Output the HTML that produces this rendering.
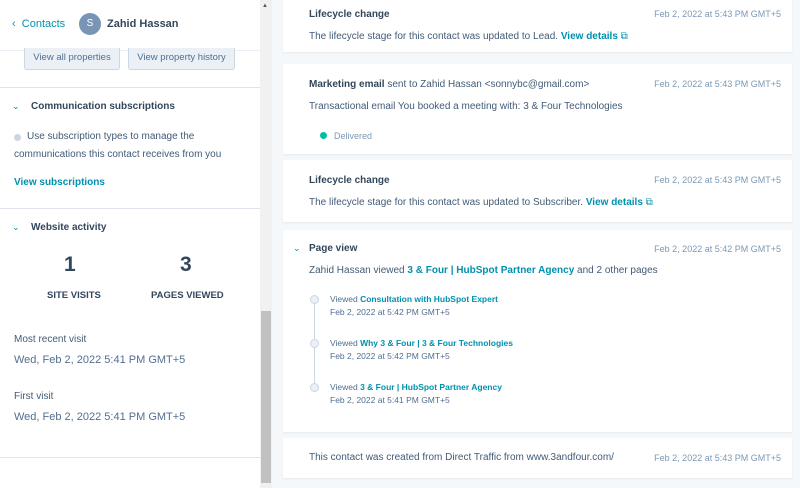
<!DOCTYPE html>
<html><head><style>
*{box-sizing:border-box;margin:0;padding:0}
body{width:800px;height:488px;overflow:hidden;font-family:"Liberation Sans",sans-serif;background:#f5f8fa;position:relative;color:#33475b}
.abs{position:absolute;white-space:nowrap}
#left{position:absolute;left:0;top:0;width:260px;height:488px;background:#fff}
.sb{position:absolute;left:260px;top:0;width:12px;height:488px;background:#f1f1f1}
.thumb{position:absolute;left:261px;top:311px;width:10px;height:172px;background:#c1c1c1}
.hr{position:absolute;left:0;width:260px;height:1px;background:#dfe3eb}
.btn{position:absolute;top:48px;height:22px;background:#eaf0f6;border:1px solid #cbd6e2;border-top:none;font-size:9.5px;color:#516f90;text-align:center;line-height:20px;border-radius:0 0 3px 3px}
.card{position:absolute;left:283px;width:509px;background:#fff;box-shadow:0 1px 2px rgba(0,0,0,.06)}
.t{font-size:10px;font-weight:bold;color:#33475b}
.d{font-size:9px;color:#7c98b6}
.b{font-size:10px;color:#425b76}
.lk{color:#0091ae;font-weight:bold}
.s{font-size:8.5px;color:#516f90}
.chev{color:#0091ae;font-size:9px}
</style></head><body>
<div id="left">
<div class="abs" style="left:12px;top:18px;font-size:11px;color:#0091ae">‹&nbsp; Contacts</div>
<div class="abs" style="left:79px;top:13px;width:22px;height:22px;border-radius:50%;background:#7a94b5;color:#fff;font-size:10px;text-align:center;line-height:22px">S</div>
<div class="abs" style="left:107px;top:18px;font-size:11px;font-weight:bold">Zahid Hassan</div>
<div class="hr" style="top:50px;background:#eaf0f6"></div>
<div class="btn" style="left:24px;width:96px">View all properties</div>
<div class="btn" style="left:128px;width:107px">View property history</div>
<div class="hr" style="top:87px"></div>
<div class="abs chev" style="left:12px;top:101px">⌄</div>
<div class="abs t" style="left:31px;top:101px">Communication subscriptions</div>
<div class="abs" style="left:14px;top:134px;width:7px;height:7px;border-radius:50%;background:#cbd6e2"></div>
<div class="abs b" style="left:27px;top:131px">Use subscription types to manage the</div>
<div class="abs b" style="left:14px;top:149px">communications this contact receives from you</div>
<div class="abs b lk" style="left:14px;top:177px">View subscriptions</div>
<div class="hr" style="top:208px"></div>
<div class="abs chev" style="left:12px;top:222px">⌄</div>
<div class="abs t" style="left:31px;top:222px">Website activity</div>
<div class="abs" style="left:64px;top:253px;font-size:21px;font-weight:bold">1</div>
<div class="abs" style="left:180px;top:253px;font-size:21px;font-weight:bold">3</div>
<div class="abs" style="left:47px;top:290px;font-size:9.5px;font-weight:bold">SITE VISITS</div>
<div class="abs" style="left:151px;top:290px;font-size:9.5px;font-weight:bold">PAGES VIEWED</div>
<div class="abs b" style="left:14px;top:334px">Most recent visit</div>
<div class="abs" style="left:14px;top:354px;font-size:11px;color:#516f90">Wed, Feb 2, 2022 5:41 PM GMT+5</div>
<div class="abs b" style="left:14px;top:391px">First visit</div>
<div class="abs" style="left:14px;top:411px;font-size:11px;color:#516f90">Wed, Feb 2, 2022 5:41 PM GMT+5</div>
<div class="hr" style="top:457px"></div>
</div>
<div class="sb"></div><div class="thumb"></div>
<div class="abs" style="left:262px;top:3px;font-size:6px;color:#555">▲</div>

<div class="card" style="top:-10px;height:62px">
<div class="abs t" style="left:26px;top:19px">Lifecycle change</div>
<div class="abs d" style="right:11px;top:19px">Feb 2, 2022 at 5:43 PM GMT+5</div>
<div class="abs b" style="left:26px;top:41px">The lifecycle stage for this contact was updated to Lead. <span class="lk">View details</span> <span style="color:#0091ae">⧉</span></div>
</div>
<div class="card" style="top:64px;height:90px">
<div class="abs b" style="left:26px;top:15px"><b style="color:#33475b">Marketing email</b> sent to Zahid Hassan &lt;sonnybc@gmail.com&gt;</div>
<div class="abs d" style="right:11px;top:15px">Feb 2, 2022 at 5:43 PM GMT+5</div>
<div class="abs b" style="left:26px;top:37px">Transactional email You booked a meeting with: 3 &amp; Four Technologies</div>
<div class="abs" style="left:37px;top:68px;width:7px;height:7px;border-radius:50%;background:#00bda5"></div>
<div class="abs d" style="left:51px;top:67px">Delivered</div>
</div>
<div class="card" style="top:160px;height:62px">
<div class="abs t" style="left:26px;top:15px">Lifecycle change</div>
<div class="abs d" style="right:11px;top:15px">Feb 2, 2022 at 5:43 PM GMT+5</div>
<div class="abs b" style="left:26px;top:37px">The lifecycle stage for this contact was updated to Subscriber. <span class="lk">View details</span> <span style="color:#0091ae">⧉</span></div>
</div>
<div class="card" style="top:230px;height:202px">
<div class="abs chev" style="left:10px;top:13px">⌄</div>
<div class="abs t" style="left:26px;top:13px">Page view</div>
<div class="abs d" style="right:11px;top:14px">Feb 2, 2022 at 5:42 PM GMT+5</div>
<div class="abs b" style="left:26px;top:35px">Zahid Hassan viewed <span class="lk">3 &amp; Four | HubSpot Partner Agency</span> and 2 other pages</div>
<div class="abs" style="left:31px;top:70px;width:1px;height:88px;background:#cbd6e2"></div>
<div class="abs" style="left:27px;top:65px;width:9px;height:9px;border-radius:50%;background:#eaf0f6;border:1px solid #cbd6e2"></div>
<div class="abs" style="left:27px;top:109px;width:9px;height:9px;border-radius:50%;background:#eaf0f6;border:1px solid #cbd6e2"></div>
<div class="abs" style="left:27px;top:153px;width:9px;height:9px;border-radius:50%;background:#eaf0f6;border:1px solid #cbd6e2"></div>
<div class="abs s" style="left:47px;top:64px">Viewed <span class="lk">Consultation with HubSpot Expert</span></div>
<div class="abs s" style="left:47px;top:77px">Feb 2, 2022 at 5:42 PM GMT+5</div>
<div class="abs s" style="left:47px;top:108px">Viewed <span class="lk">Why 3 &amp; Four | 3 &amp; Four Technologies</span></div>
<div class="abs s" style="left:47px;top:121px">Feb 2, 2022 at 5:42 PM GMT+5</div>
<div class="abs s" style="left:47px;top:152px">Viewed <span class="lk">3 &amp; Four | HubSpot Partner Agency</span></div>
<div class="abs s" style="left:47px;top:165px">Feb 2, 2022 at 5:41 PM GMT+5</div>
</div>
<div class="card" style="top:438px;height:40px">
<div class="abs b" style="left:26px;top:14px">This contact was created from Direct Traffic from www.3andfour.com/</div>
<div class="abs d" style="right:11px;top:15px">Feb 2, 2022 at 5:43 PM GMT+5</div>
</div>
</body></html>
